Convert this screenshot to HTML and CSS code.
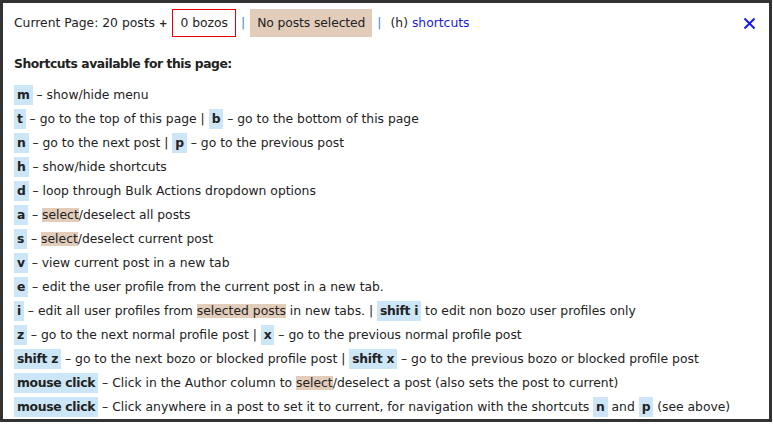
FILE: index.html
```html
<!DOCTYPE html>
<html>
<head>
<meta charset="utf-8">
<link rel="stylesheet" href="styles.css">
</head>
<body>
<div class="panel">
  <div class="header">
    <span class="txt">Current Page: 20 posts</span>
    <span class="plus">+</span>
    <span class="bozos">0 bozos</span>
    <span class="sep">|</span>
    <span class="selected">No posts selected</span>
    <span class="sep">|</span>
    <span class="txt help">(h) <a class="link" href="#">shortcuts</a></span>
    <span class="close">
      <svg width="13" height="13" viewBox="0 0 13 13"><path d="M1.5 1.5 L11.5 11.5 M11.5 1.5 L1.5 11.5" stroke="#1a1aee" stroke-width="2" fill="none"/></svg>
    </span>
  </div>
  <div class="title">Shortcuts available for this page:</div>
  <ul class="list">
    <li><span class="k">m</span> – show/hide menu</li>
    <li><span class="k">t</span> – go to the top of this page | <span class="k">b</span> – go to the bottom of this page</li>
    <li><span class="k">n</span> – go to the next post | <span class="k">p</span> – go to the previous post</li>
    <li><span class="k">h</span> – show/hide shortcuts</li>
    <li><span class="k">d</span> – loop through Bulk Actions dropdown options</li>
    <li><span class="k">a</span> – <span class="hl">select</span>/deselect all posts</li>
    <li><span class="k">s</span> – <span class="hl">select</span>/deselect current post</li>
    <li><span class="k">v</span> – view current post in a new tab</li>
    <li><span class="k">e</span> – edit the user profile from the current post in a new tab.</li>
    <li><span class="k">i</span> – edit all user profiles from <span class="hl">selected posts</span> in new tabs. | <span class="k">shift i</span> to edit non bozo user profiles only</li>
    <li><span class="k">z</span> – go to the next normal profile post | <span class="k">x</span> – go to the previous normal profile post</li>
    <li><span class="k">shift z</span> – go to the next bozo or blocked profile post | <span class="k">shift x</span> – go to the previous bozo or blocked profile post</li>
    <li><span class="k">mouse click</span> – Click in the Author column to <span class="hl">select</span>/deselect a post (also sets the post to current)</li>
    <li><span class="k">mouse click</span> – Click anywhere in a post to set it to current, for navigation with the shortcuts <span class="k">n</span> and <span class="k">p</span> (see above)</li>
  </ul>
</div>
</body>
</html>
```
FILE: styles.css
```css
html, body {
  margin: 0;
  padding: 0;
  background: #fff;
}
body {
  font-family: "DejaVu Sans", Verdana, sans-serif;
  font-size: 12.35px;
  color: #222;
  overflow: hidden;
}
.panel {
  box-sizing: border-box;
  width: 772px;
  height: 422px;
  border: 3px solid #333;
  padding: 6px 11px 0 11px;
  background: #fff;
}
.header {
  display: flex;
  align-items: center;
  height: 28px;
}
.plus {
  margin: 0 5px 0 4px;
  font-weight: bold;
  font-size: 10px;
}
.bozos {
  box-sizing: border-box;
  height: 28px;
  line-height: 26px;
  border: 1px solid #e00;
  padding: 0 7px;
}
.sep {
  color: #3d8fd1;
  margin: 0 5px;
}
.selected {
  height: 28px;
  line-height: 28px;
  background: #e2cdbb;
  padding: 0 7px;
  letter-spacing: -0.1px;
}
.help {
  margin-left: 4px;
}
.link {
  color: #1a1adf;
  text-decoration: none;
}
.close {
  margin-left: auto;
  margin-right: 2px;
  display: flex;
}
.title {
  font-weight: bold;
  letter-spacing: -0.45px;
  margin-top: 19px;
  line-height: 16px;
}
.list {
  list-style: none;
  margin: 11px 0 0 0;
  padding: 0;
}
.list li {
  line-height: 24px;
  height: 24px;
  white-space: nowrap;
}
.k {
  font-weight: bold;
  letter-spacing: -0.3px;
  background: #cce6f7;
  padding: 3px 3px;
}
.hl {
  background: #e2cdbb;
}
```
